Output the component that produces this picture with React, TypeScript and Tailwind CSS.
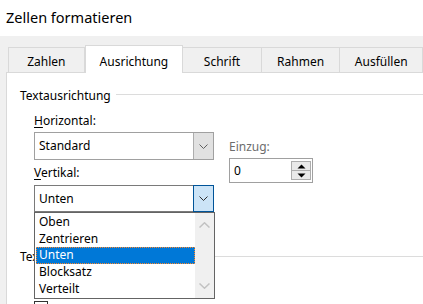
import React from "react";

const Chevron = ({ color = "#606060" }: { color?: string }) => (
  <svg width="9" height="5" viewBox="0 0 9 5" className="block">
    <path d="M0.5 0.5 L4.5 4.5 L8.5 0.5" fill="none" stroke={color} strokeWidth="1" />
  </svg>
);

const Tab = ({ label, width, active }: { label: string; width: number; active?: boolean }) =>
  active ? (
    <div
      className="relative z-10 h-[28px] -mb-px bg-white border-l border-t border-r border-[#d9d9d9] flex justify-center pt-[8px]"
      style={{ width }}
    >
      {label}
    </div>
  ) : (
    <div
      className="h-[25px] bg-[#f0f0f0] border-t border-r border-[#d9d9d9] flex justify-center pt-[6px] -ml-px first:ml-0 border-l"
      style={{ width }}
    >
      {label}
    </div>
  );

export default function App() {
  return (
    <div
      className="w-[423px] h-[304px] overflow-hidden bg-white relative text-[12px] text-black leading-[16px]"
      style={{ fontFamily: '"Noto Sans", "Open Sans", sans-serif' }}
    >
      <div className="h-[36px] pl-[6px] flex items-center text-[14.5px] leading-[20px] pb-[2px]">Zellen formatieren</div>
      <div className="bg-[#f0f0f0] h-[268px] pl-[6px]">
        <div className="h-[36px] flex items-end pl-[2px]">
          <Tab label="Zahlen" width={77} />
          <Tab label="Ausrichtung" width={99} active />
          <Tab label="Schrift" width={80} />
          <Tab label="Rahmen" width={80} />
          <Tab label="Ausfüllen" width={84} />
        </div>
        <div className="relative bg-white border-l border-t border-[#d9d9d9] h-[232px] pl-[13px]">
          <div className="flex items-center mt-[15px] h-[16px]">
            <span>Textausrichtung</span>
            <div className="flex-1 h-px bg-[#dcdcdc] ml-[5px] mt-[-4px]" />
          </div>
          <div className="flex pl-[14px]">
            <div className="w-[180px]">
              <div className="mt-[9px] h-[16px]">
                <span className="underline underline-offset-2">H</span>orizontal:
              </div>
              <div className="mt-[3px] h-[28px] border border-[#a0a0a0] flex bg-white">
                <div className="flex-1 pl-[4px] flex items-center">Standard</div>
                <div className="w-[20px] bg-[#e1e1e1] border-l border-[#adadad] flex items-center justify-center">
                  <Chevron />
                </div>
              </div>
              <div className="mt-[5px] h-[16px]">
                <span className="underline underline-offset-2">V</span>ertikal:
              </div>
              <div className="mt-[4px] h-[27px] border border-[#7a7a7a] flex bg-white">
                <div className="flex-1 pl-[4px] flex items-center">Unten</div>
                <div className="w-[21px] -my-px -mr-px bg-[#cce4f7] border border-[#005499] flex items-center justify-center">
                  <Chevron color="#303030" />
                </div>
              </div>
            </div>
            <div className="ml-[15px]">
              <div className="mt-[35px] h-[16px] text-[#6d6d6d]">Einzug:</div>
              <div className="mt-[3px] w-[84px] h-[25px] border border-[#a0a0a0] flex">
                <div className="flex-1 pl-[4px] flex items-center">0</div>
                <div className="w-[20px] my-[2px] mr-[1px] flex flex-col">
                  <div className="flex-1 bg-[#e9e9e9] border border-[#adadad] flex items-center justify-center">
                    <svg width="9" height="5" viewBox="0 0 9 5"><path d="M0.5 4.5 L4.5 0.5 L8.5 4.5 Z" fill="#000" /></svg>
                  </div>
                  <div className="flex-1 bg-[#e9e9e9] border border-t-0 border-[#adadad] flex items-center justify-center">
                    <svg width="9" height="5" viewBox="0 0 9 5"><path d="M0.5 0.5 L4.5 4.5 L8.5 0.5 Z" fill="#000" /></svg>
                  </div>
                </div>
              </div>
            </div>
          </div>
          <div className="flex items-center mt-[37px] h-[16px]">
            <span>Textsteuerung</span>
            <div className="flex-1 h-px bg-[#dcdcdc] ml-[5px] mt-[-1px]" />
          </div>
          <div className="mt-[36px] ml-[14px] w-[14px] h-[14px] border border-[#333]" />

          <div className="absolute left-[27px] top-[139px] w-[181px] h-[87px] border border-[#646464] bg-white flex">
            <div className="flex-1 pt-[1px] pl-[1px]">
              {["Oben", "Zentrieren", "Unten", "Blocksatz", "Verteilt"].map((t) => (
                <div
                  key={t}
                  className={
                    t === "Unten"
                      ? "h-[16.6px] pl-[2px] flex items-center bg-[#0078d7] text-white border border-dotted border-[#ff8728]"
                      : "h-[16.6px] pl-[3px] flex items-center"
                  }
                >
                  {t}
                </div>
              ))}
            </div>
            <div className="w-[19px] bg-[#f0f0f0] flex flex-col justify-between items-center py-[9px]">
              <svg width="11" height="6" viewBox="0 0 11 6"><path d="M0.5 5.5 L5.5 0.8 L10.5 5.5" fill="none" stroke="#c2c2c2" strokeWidth="1.5" /></svg>
              <svg width="11" height="6" viewBox="0 0 11 6"><path d="M0.5 0.5 L5.5 5.2 L10.5 0.5" fill="none" stroke="#c2c2c2" strokeWidth="1.5" /></svg>
            </div>
          </div>
        </div>
      </div>
    </div>
  );
}
